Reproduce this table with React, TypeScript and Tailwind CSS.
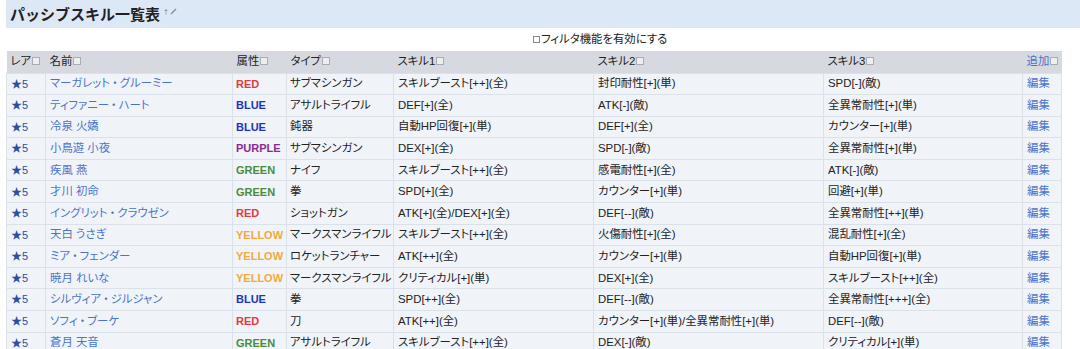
import React from "react";

type Row = [string, string, string, string, string, string];

const rows: Row[] = [
  ["マーガレット・グルーミー", "RED", "サブマシンガン", "スキルブースト[++](全)", "封印耐性[+](単)", "SPD[-](敵)"],
  ["ティファニー・ハート", "BLUE", "アサルトライフル", "DEF[+](全)", "ATK[-](敵)", "全異常耐性[+](単)"],
  ["冷泉 火嬌", "BLUE", "鈍器", "自動HP回復[+](単)", "DEF[+](全)", "カウンター[+](単)"],
  ["小鳥遊 小夜", "PURPLE", "サブマシンガン", "DEX[+](全)", "SPD[-](敵)", "全異常耐性[+](単)"],
  ["疾風 燕", "GREEN", "ナイフ", "スキルブースト[++](全)", "感電耐性[+](全)", "ATK[-](敵)"],
  ["才川 初命", "GREEN", "拳", "SPD[+](全)", "カウンター[+](単)", "回避[+](単)"],
  ["イングリット・クラウゼン", "RED", "ショットガン", "ATK[+](全)/DEX[+](全)", "DEF[--](敵)", "全異常耐性[++](単)"],
  ["天白 うさぎ", "YELLOW", "マークスマンライフル", "スキルブースト[++](全)", "火傷耐性[+](全)", "混乱耐性[+](全)"],
  ["ミア・フェンダー", "YELLOW", "ロケットランチャー", "ATK[++](全)", "カウンター[+](単)", "自動HP回復[+](単)"],
  ["暁月 れいな", "YELLOW", "マークスマンライフル", "クリティカル[+](単)", "DEX[+](全)", "スキルブースト[++](全)"],
  ["シルヴィア・ジルジャン", "BLUE", "拳", "SPD[++](全)", "DEF[--](敵)", "全異常耐性[+++](全)"],
  ["ソフィ・ブーケ", "RED", "刀", "ATK[++](全)", "カウンター[+](単)/全異常耐性[+](単)", "DEF[--](敵)"],
  ["蒼月 天音", "GREEN", "アサルトライフル", "スキルブースト[++](全)", "DEX[-](敵)", "クリティカル[+](単)"],
];

const attrColor: Record<string, string> = {
  RED: "text-[#e03a3e]",
  BLUE: "text-[#1f33b8]",
  PURPLE: "text-[#8a2a8e]",
  GREEN: "text-[#4a8c3c]",
  YELLOW: "text-[#f2a93b]",
};

function Name({ text }: { text: string }) {
  const parts = text.split("・");
  return (
    <>
      {parts.map((p, i) => (
        <React.Fragment key={i}>
          {i > 0 && <span className="px-[2px]">・</span>}
          {p}
        </React.Fragment>
      ))}
    </>
  );
}

function SortIcon() {
  return (
    <span className="inline-block w-[8px] h-[8px] ml-[1px] border border-[#a8adb3] bg-[#eceef0]" />
  );
}

function Th({ children, link }: { children: React.ReactNode; link?: boolean }) {
  return (
    <th className="bg-[#d6dae0] text-left font-normal px-[4px] h-[22px] whitespace-nowrap">
      <span className={link ? "text-[#4a74c9]" : "text-[#222]"}>{children}</span>
      <SortIcon />
    </th>
  );
}

export default function App() {
  const font = {
    fontFamily: '"Liberation Sans", "Noto Sans CJK JP", sans-serif',
    fontFeatureSettings: '"palt"',
  };
  return (
    <div className="w-[1080px] h-[349px] overflow-hidden bg-white text-[11.4px] text-[#222]" style={font}>
      <div className="ml-[6px] h-[28px] bg-[#dde8f6] flex items-center pl-[4px]">
        <h2 className="text-[15px] font-bold text-[#222] leading-none [font-feature-settings:normal]">パッシブスキル一覧表</h2>
        <span className="ml-[4px] text-[7px] text-[#777] leading-none -mt-[6px]">†</span>
        <svg width="7" height="7" viewBox="0 0 7 7" className="ml-[2px] -mt-[5px]">
          <path d="M1 6 L6 1" stroke="#888" strokeWidth="1.2" />
        </svg>
      </div>
      <div className="h-[23px] flex items-center pl-[533px]">
        <span className="inline-block w-[7px] h-[7px] border border-[#888] mr-[1px]" />
        <span>フィルタ機能を有効にする</span>
      </div>
      <table className="ml-[6px] table-fixed border-collapse w-[1055px]">
        <colgroup>
          <col className="w-[39px]" />
          <col className="w-[187px]" />
          <col className="w-[54px]" />
          <col className="w-[107px]" />
          <col className="w-[200px]" />
          <col className="w-[230px]" />
          <col className="w-[199px]" />
          <col className="w-[39px]" />
        </colgroup>
        <thead>
          <tr>
            <Th>レア</Th>
            <Th>名前</Th>
            <Th>属性</Th>
            <Th>タイプ</Th>
            <Th>スキル1</Th>
            <Th>スキル2</Th>
            <Th>スキル3</Th>
            <Th link>追加</Th>
          </tr>
        </thead>
        <tbody>
          {rows.map((r, i) => (
            <tr key={i} className="bg-[#f0f4f9] h-[21.6px]">
              <td className="border border-[#dbe1e8] px-[4px] text-[11px] text-[#2d4f9e] whitespace-nowrap">★5</td>
              <td className="border border-[#dbe1e8] px-[4px] text-[#4a74c9] whitespace-nowrap"><Name text={r[0]} /></td>
              <td className={`border border-[#dbe1e8] px-[3px] text-[11px] font-bold whitespace-nowrap ${attrColor[r[1]]}`}>{r[1]}</td>
              <td className="border border-[#dbe1e8] pl-[3px] pr-0 whitespace-nowrap">{r[2]}</td>
              <td className="border border-[#dbe1e8] px-[4px] whitespace-nowrap">{r[3]}</td>
              <td className="border border-[#dbe1e8] px-[4px] whitespace-nowrap">{r[4]}</td>
              <td className="border border-[#dbe1e8] px-[4px] whitespace-nowrap">{r[5]}</td>
              <td className="border border-[#dbe1e8] px-[4px] text-[#4a74c9] whitespace-nowrap">編集</td>
            </tr>
          ))}
        </tbody>
      </table>
    </div>
  );
}
